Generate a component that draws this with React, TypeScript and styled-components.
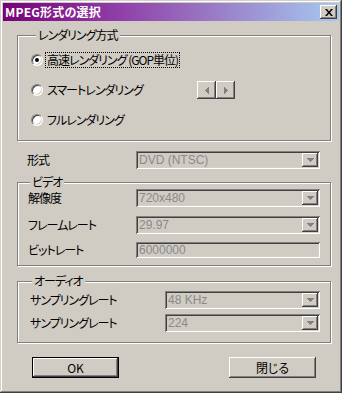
import React from "react";
import styled, { createGlobalStyle } from "styled-components";

const FACE = "#d0ccc4";

const Global = createGlobalStyle`
  html, body { margin: 0; padding: 0; background: ${FACE}; }
  body { font-family: "Noto Sans CJK JP", "Noto Sans", sans-serif; font-size: 12px; color: #000; }
  * { box-sizing: border-box; }
`;

const Window = styled.div`
  width: 342px;
  height: 393px;
  padding: 3px;
  background: ${FACE};
  box-shadow: inset -1px -1px #404040, inset 1px 1px #d4d0c8,
    inset -2px -2px #808080, inset 2px 2px #fff;
  display: flex;
  flex-direction: column;
`;

const TitleBar = styled.div`
  height: 18px;
  display: flex;
  align-items: center;
  justify-content: space-between;
  padding: 0 2px 0 2px;
  background: linear-gradient(to right, #780078 0%, #9040a8 35%, #a6caf0 100%);
`;

const TitleText = styled.span`
  color: #fff;
  font-weight: bold;
  font-size: 12px;
  line-height: 18px;
  letter-spacing: 0.2px;
  font-feature-settings: "palt";
`;

const CloseButton = styled.div`
  width: 17px;
  height: 14px;
  background: ${FACE};
  box-shadow: inset -1px -1px #404040, inset 1px 1px #fff, inset -2px -2px #808080;
  display: flex;
  align-items: center;
  justify-content: center;
`;

const Client = styled.div`
  padding: 8px 8px 0 14px;
  display: flex;
  flex-direction: column;
`;

const Group = styled.fieldset<{ $pt: number; $pb: number; $pl: number; $mt?: number }>`
  margin: ${(p) => p.$mt ?? 0}px 0 0 0;
  padding: ${(p) => p.$pt}px 0 ${(p) => p.$pb}px ${(p) => p.$pl}px;
  min-width: 0;
  border: 1px solid #808080;
  box-shadow: inset 1px 1px #fff, 1px 1px #fff;
  width: 314px;
`;

const Legend = styled.legend<{ $indent: number }>`
  margin-left: ${(p) => p.$indent}px;
  padding: 0 2px;
  line-height: 12px;
  height: 12px;
  font-size: 12px;
  background: ${FACE};
  font-feature-settings: "palt";
  letter-spacing: -1px;
`;

const RadioRow = styled.div`
  height: 30px;
  display: grid;
  grid-template-columns: 14px 152px auto;
  align-items: center;
`;

const Radio = styled.span<{ $checked?: boolean }>`
  width: 12px;
  height: 12px;
  border-radius: 50%;
  border: 1px solid;
  border-color: #808080 #fff #fff #808080;
  background: #fff;
  box-shadow: inset 1px 1px #404040, inset -1px -1px #d4d0c8;
  display: flex;
  align-items: center;
  justify-content: center;
  &::after {
    content: "";
    display: ${(p) => (p.$checked ? "block" : "none")};
    width: 4px;
    height: 4px;
    border-radius: 50%;
    background: #000;
  }
`;

const RadioText = styled.span<{ $focus?: boolean }>`
  justify-self: start;
  line-height: 12px;
  padding: 1px 1px;
  border: 1px dotted ${(p) => (p.$focus ? "#000" : "transparent")};
  font-feature-settings: "palt";
  letter-spacing: -1px;
  white-space: nowrap;
`;

const Spin = styled.div`
  display: flex;
`;

const SpinButton = styled.div`
  width: 19px;
  height: 18px;
  background: ${FACE};
  box-shadow: inset -1px -1px #404040, inset 1px 1px #fff, inset -2px -2px #808080;
  display: flex;
  align-items: center;
  justify-content: center;
`;

const FieldRow = styled.div<{ $label: number; $field: number; $mt?: number; $pl: number }>`
  display: grid;
  grid-template-columns: ${(p) => p.$label}px ${(p) => p.$field}px;
  align-items: center;
  margin-top: ${(p) => p.$mt ?? 0}px;
  padding-left: ${(p) => p.$pl}px;
`;

const Label = styled.span`
  line-height: 14px;
  font-feature-settings: "palt";
  letter-spacing: -1px;
  white-space: nowrap;
`;

const Sunken = styled.div<{ $h: number }>`
  height: ${(p) => p.$h}px;
  background: ${FACE};
  box-shadow: inset 1px 1px #808080, inset -1px -1px #fff,
    inset 2px 2px #404040, inset -2px -2px #d4d0c8;
  display: flex;
  align-items: center;
  justify-content: space-between;
  padding: 2px 2px 2px 3px;
`;

const FieldText = styled.span`
  color: #8a8a8a;
  font-family: "Liberation Sans", Arial, sans-serif;
  font-size: 12px;
  line-height: 12px;
`;

const DropButton = styled.div`
  width: 16px;
  height: 100%;
  background: ${FACE};
  box-shadow: inset -1px -1px #404040, inset 1px 1px #fff, inset -2px -2px #808080;
  display: flex;
  align-items: center;
  justify-content: center;
`;

const Buttons = styled.div`
  display: flex;
  justify-content: space-between;
  padding: 0 15px;
  margin-top: 14px;
`;

const PushButton = styled.div<{ $default?: boolean }>`
  width: 87px;
  height: 21px;
  background: ${FACE};
  display: flex;
  align-items: center;
  justify-content: center;
  font-feature-settings: "palt";
  box-shadow: ${(p) =>
    p.$default
      ? "inset 0 0 0 1px #000, inset -2px -2px #404040, inset 2px 2px #fff, inset -3px -3px #808080"
      : "inset -1px -1px #404040, inset 1px 1px #fff, inset -2px -2px #808080"};
`;

const Combo = ({ value, h = 18 }: { value: string; h?: number }) => (
  <Sunken $h={h}>
    <FieldText>{value}</FieldText>
    <DropButton>
      <svg width="7" height="4" viewBox="0 0 7 4">
        <path d="M0 0h7v1H0zM1 1h5v1H1zM2 2h3v1H2zM3 3h1v1H3z" fill="#808080" />
      </svg>
    </DropButton>
  </Sunken>
);

export default function App() {
  return (
    <>
      <Global />
      <Window>
        <TitleBar>
          <TitleText>MPEG形式の選択</TitleText>
          <CloseButton>
            <svg width="8" height="7" viewBox="0 0 8 7">
              <path d="M0 0h2l2 2.5L6 0h2L5 3.5 8 7H6L4 4.5 2 7H0l3-3.5z" fill="#000" />
            </svg>
          </CloseButton>
        </TitleBar>
        <Client>
          <Group $pt={4} $pb={5} $pl={13}>
            <Legend $indent={5}>レンダリング方式</Legend>
            <RadioRow>
              <Radio $checked />
              <RadioText $focus>高速レンダリング (GOP単位)</RadioText>
            </RadioRow>
            <RadioRow>
              <Radio />
              <RadioText>スマートレンダリング</RadioText>
              <Spin>
                <SpinButton>
                  <svg width="4" height="7" viewBox="0 0 4 7">
                    <path d="M3 0h1v7H3zM2 1h1v5H2zM1 2h1v3H1zM0 3h1v1H0z" fill="#808080" />
                  </svg>
                </SpinButton>
                <SpinButton>
                  <svg width="4" height="7" viewBox="0 0 4 7">
                    <path d="M0 0h1v7H0zM1 1h1v5H1zM2 2h1v3H2zM3 3h1v1H3z" fill="#808080" />
                  </svg>
                </SpinButton>
              </Spin>
            </RadioRow>
            <RadioRow>
              <Radio />
              <RadioText>フルレンダリング</RadioText>
            </RadioRow>
          </Group>

          <FieldRow $label={109} $field={184} $mt={10} $pl={10}>
            <Label>形式</Label>
            <Combo value="DVD (NTSC)" />
          </FieldRow>

          <Group $pt={1} $pb={7} $pl={10} $mt={7}>
            <Legend $indent={2}>ビデオ</Legend>
            <FieldRow $label={108} $field={184} $pl={0}>
              <Label>解像度</Label>
              <Combo value="720x480" />
            </FieldRow>
            <FieldRow $label={108} $field={184} $mt={9} $pl={0}>
              <Label>フレームレート</Label>
              <Combo value="29.97" />
            </FieldRow>
            <FieldRow $label={108} $field={184} $mt={8} $pl={0}>
              <Label>ビットレート</Label>
              <Sunken $h={16}>
                <FieldText>6000000</FieldText>
              </Sunken>
            </FieldRow>
          </Group>

          <Group $pt={4} $pb={10} $pl={12} $mt={9}>
            <Legend $indent={2}>オーディオ</Legend>
            <FieldRow $label={135} $field={155} $pl={0}>
              <Label>サンプリングレート</Label>
              <Combo value="48 KHz" />
            </FieldRow>
            <FieldRow $label={135} $field={155} $mt={5} $pl={0}>
              <Label>サンプリングレート</Label>
              <Combo value="224" />
            </FieldRow>
          </Group>

          <Buttons>
            <PushButton $default>OK</PushButton>
            <PushButton>閉じる</PushButton>
          </Buttons>
        </Client>
      </Window>
    </>
  );
}
